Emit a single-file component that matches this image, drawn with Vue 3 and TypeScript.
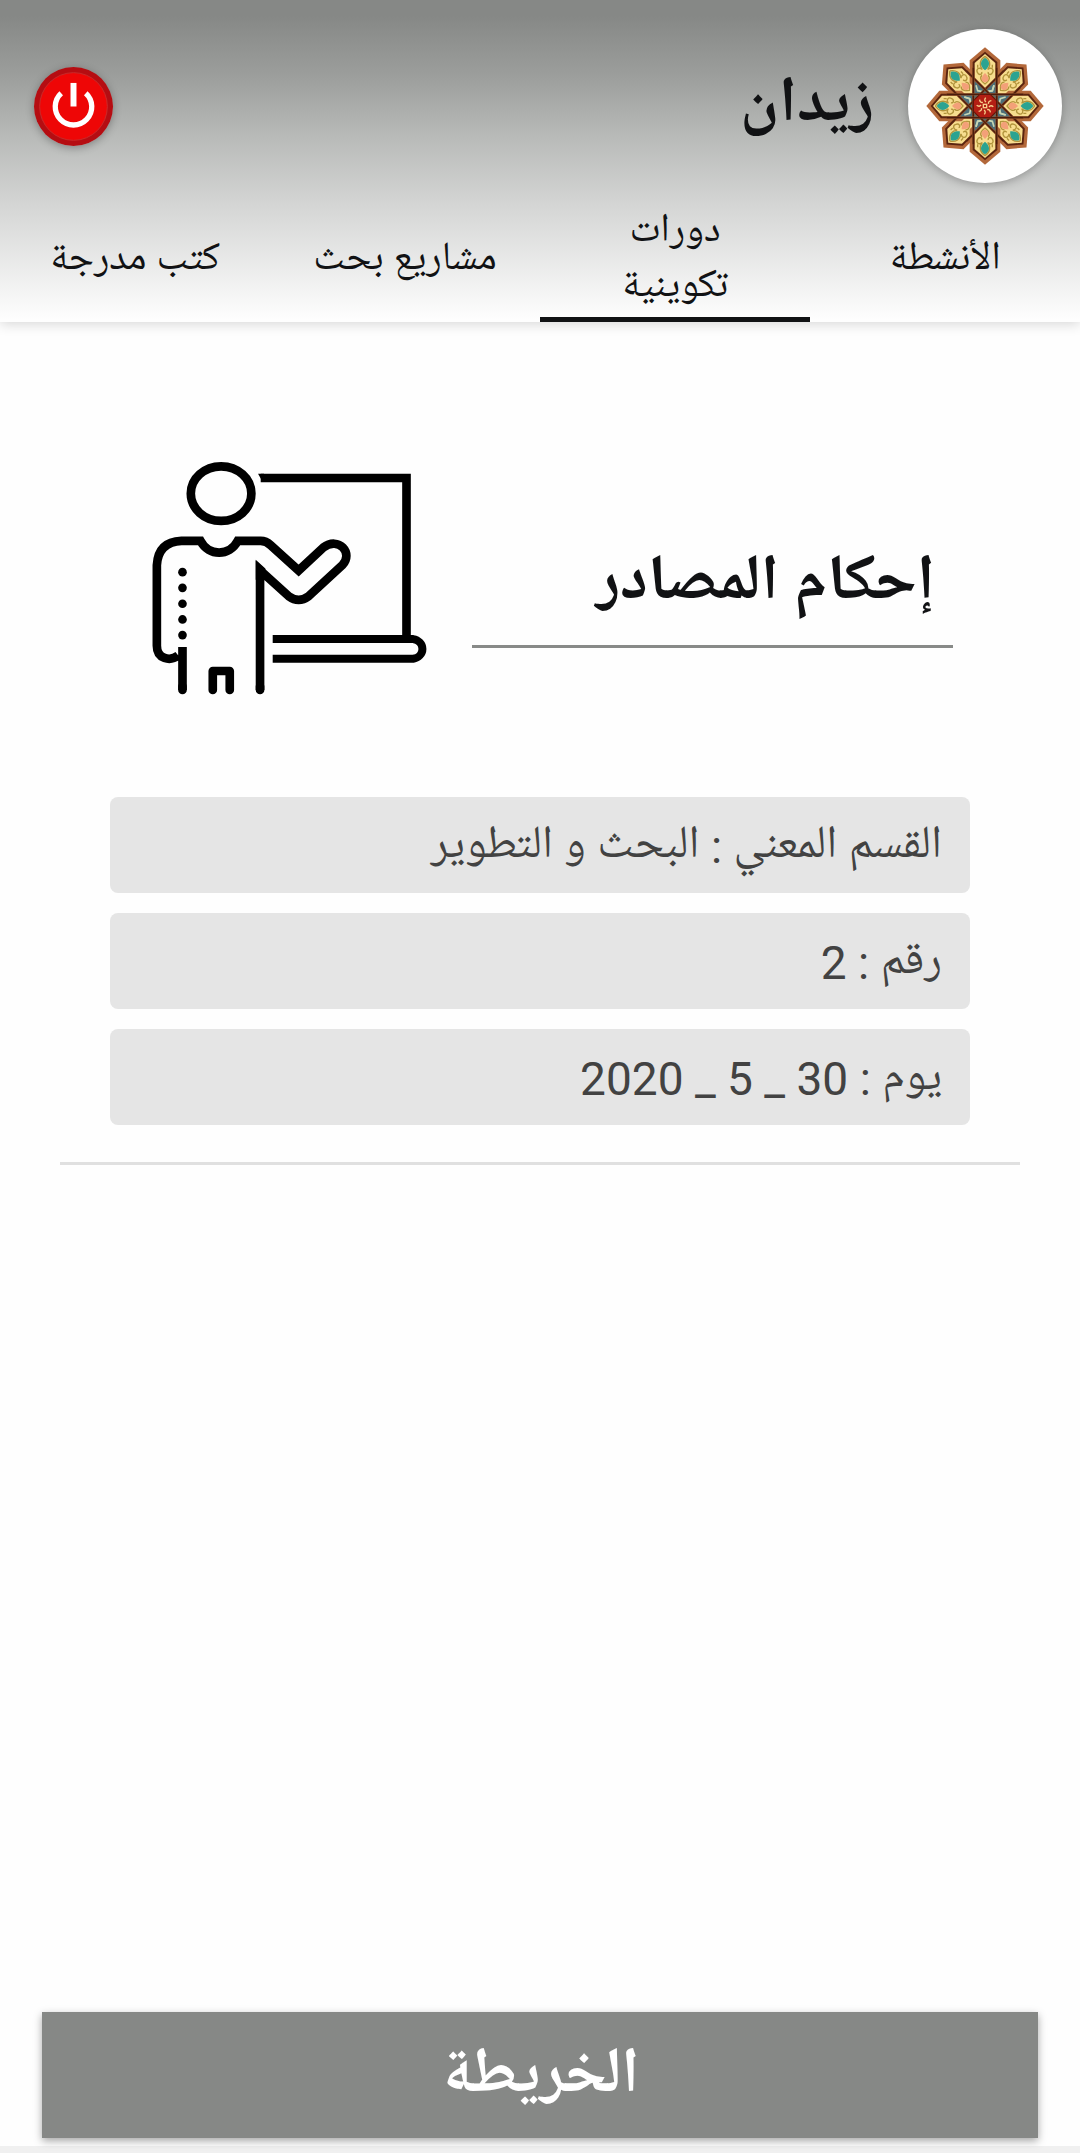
<script setup lang="ts">
import { ref } from 'vue'

interface Tab {
  id: string
  label: string
}

interface Detail {
  label: string
  value: string
}

const tabs: Tab[] = [
  { id: 'activities', label: 'الأنشطة' },
  { id: 'courses', label: 'دورات تكوينية' },
  { id: 'research', label: 'مشاريع بحث' },
  { id: 'books', label: 'كتب مدرجة' },
]

const details: Detail[] = [
  { label: 'القسم المعني', value: 'البحث و التطوير' },
  { label: 'رقم', value: '2' },
  { label: 'يوم', value: '2020 _ 5 _ 30' },
]

const active = ref('courses')
const petals = [45, 135, 225, 315, 0, 90, 180, 270]
const bands = [45, 135, 0, 90]
const buttons = [397, 444, 492, 539, 586]
</script>

<template>
  <div class="app" dir="rtl" lang="ar">
    <header class="header">
      <div class="bar">
        <div class="avatar">
          <svg viewBox="-231 -231 462 462" aria-hidden="true">
            <defs>
              <g id="petal">
                <path d="M0-176 46-137V-70L0-24-46-70V-137Z" fill="#b3683a" />
                <path d="M0-163 37-132V-84L0-48-37-84V-132Z" fill="#5a2410" />
                <path d="M0-156 31-129V-82L0-52-31-82V-129Z" fill="#f7dd8f" />
                <g fill="none" stroke="#b1943c" stroke-width="4">
                  <path d="M0-149C-16-139-18-122-8-110C-20-118-27-109-23-101C-19-91-7-94-10-102" />
                  <path d="M0-149C16-139 18-122 8-110C20-118 27-109 23-101C19-91 7-94 10-102" />
                  <path d="M-22-124V-115M22-124V-115M-9-92C-18-84-10-74 0-66C10-74 18-84 9-92" />
                </g>
                <path d="M0-145C18-133 14-119 0-107C-14-119-18-133 0-145Z" fill="#2ba391" />
                <path d="M0-99C15-84 12-73 0-71C-12-73-15-84 0-99Z" fill="#f3a078" />
              </g>
            </defs>
            <use v-for="a in petals" :key="a" href="#petal" :transform="`rotate(${a})`" />
            <path d="M-32-76 0-49 32-76 35-35 76-32 49 0 76 32 35 35 32 76 0 49-32 76-35 35-76 32-49 0-76-32-35-35Z" fill="#4d6e78" />
            <g v-for="a in [0, 90, 180, 270]" :key="a" :transform="`rotate(${a})`">
              <path d="M-27-62-22-46-8-43M-62-27-46-22-43-8M27-62 22-46 8-43" fill="none" stroke="#c6d5b3" stroke-width="5" />
            </g>
            <g v-for="a in bands" :key="a" :transform="`rotate(${a})`">
              <path d="M-35-115V115M35-115V115" stroke="#8b4a25" stroke-width="7" />
              <path d="M-35-115V115M35-115V115" stroke="#4a1c0d" stroke-width="4" />
            </g>
            <path d="M-15-35H15L35-15V15L15 35H-15L-35 15V-15Z" fill="#b31e13" stroke="#5a130b" stroke-width="3" />
            <g fill="none" stroke="#f7cf8b" stroke-width="4">
              <rect x="-5" y="-5" width="10" height="10" />
              <path v-for="a in petals" :key="a" d="M3-12Q-4-17 2-25" :transform="`rotate(${a})`" />
            </g>
          </svg>
        </div>
        <h1 class="name">زيدان</h1>
        <button class="power" type="button" aria-label="خروج">
          <svg viewBox="-119 -119 238 238" aria-hidden="true">
            <circle r="119" fill="#b50d12" />
            <circle r="102" fill="#ee0606" stroke="#c92a2a" stroke-width="3" />
            <path d="M-37-40A55 55 0 1 0 37-40" fill="none" stroke="#fff" stroke-width="16" />
            <path d="M0-71V0" stroke="#fff" stroke-width="18" />
          </svg>
        </button>
      </div>
      <nav class="tabs">
        <button
          v-for="tab in tabs"
          :key="tab.id"
          type="button"
          class="tab"
          :class="{ active: tab.id === active }"
          @click="active = tab.id"
        >
          <span>{{ tab.label }}</span>
        </button>
      </nav>
    </header>

    <main class="content">
      <article class="course">
        <div class="summary">
          <h2 class="title">إحكام المصادر</h2>
          <svg class="teacher" viewBox="66 66 828 700" aria-hidden="true">
            <g fill="none" stroke="#000" stroke-width="26">
              <ellipse cx="273" cy="161" rx="91" ry="82" />
              <path d="M392 114H830V597" />
              <path d="M428 598H850A34 30 0 0 1 850 657H428" stroke-width="24" />
              <path d="M157 622V751M144 647C120 666 80 658 80 618V376Q84 306 154 303H211C236 350 298 350 323 303H392Q408 303 422 316L506 392 580 323C626 288 672 340 637 376L536 469Q506 491 476 469L390 391V751" />
              <path d="M390 740V751M157 740V751M248 751V694H299V751" stroke-linecap="round" stroke-linejoin="round" />
            </g>
            <path d="M377 360 406 386V420H377ZM384 101H402V126H398Z" />
            <circle v-for="y in buttons" :key="y" cx="157" :cy="y" r="13" />
          </svg>
        </div>
        <ul class="details">
          <li v-for="d in details" :key="d.label" class="detail">
            {{ d.label }} :&nbsp;<bdi>{{ d.value }}</bdi>
          </li>
        </ul>
      </article>
    </main>

    <footer class="footer">
      <button class="map" type="button">الخريطة</button>
    </footer>
  </div>
</template>

<style>
body {
  margin: 0;
  background: #f0f0f0;
}
</style>

<style scoped>
.app {
  display: flex;
  flex-direction: column;
  min-height: 100vh;
  box-sizing: border-box;
  border-bottom: 7px solid #f0f0f0;
  background: #fefefe;
  color: #111214;
  font-family: Roboto, 'Noto Naskh Arabic UI', 'Noto Naskh Arabic', 'Noto Sans Arabic', 'DejaVu Sans', sans-serif;
}
button {
  margin: 0;
  padding: 0;
  border: 0;
  background: none;
  color: inherit;
  font: inherit;
  cursor: pointer;
}
svg {
  display: block;
  overflow: visible;
}
.header {
  background: linear-gradient(#868886 16px, #9c9e9c 76px, #b8bab8 136px, #d4d5d4 204px, #fefefe 320px);
  box-shadow: 0 2px 12px rgba(0, 0, 0, 0.16);
}
.bar {
  display: flex;
  align-items: center;
  height: 154px;
  padding: 29px 18px 23px 34px;
}
.avatar {
  width: 154px;
  height: 154px;
  border-radius: 50%;
  background: #fff;
  box-shadow: 0 2px 8px rgba(0, 0, 0, 0.25);
}
.name {
  flex: 1;
  margin: 0 34px 0 0;
  padding-top: 4px;
  font-size: 64px;
  line-height: 80px;
  font-weight: 700;
}
.power {
  width: 79px;
  height: 79px;
  border-radius: 50%;
  box-shadow: 0 2px 8px rgba(0, 0, 0, 0.3);
}
.tabs {
  display: flex;
}
.tab {
  flex: 1 1 0;
  display: flex;
  align-items: center;
  justify-content: center;
  height: 116px;
  padding: 0 40px 3px;
  box-sizing: border-box;
  border-bottom: 5px solid transparent;
  font-size: 40px;
  line-height: 55px;
}
.tab.active {
  border-bottom-color: #111214;
}
.content {
  flex: 1;
}
.course {
  margin: 0 60px;
  padding: 140px 50px 37px;
  border-bottom: 3px solid #e0e0e0;
}
.summary {
  display: flex;
  align-items: flex-start;
  justify-content: space-between;
  gap: 44px;
  padding: 0 17px 102px 42px;
}
.title {
  flex: 1;
  margin: 84px 0 0;
  padding: 0 18px 19px;
  border-bottom: 3px solid #888a88;
  font-size: 64px;
  line-height: 80px;
  font-weight: 700;
}
.teacher {
  width: 276px;
  height: 233px;
}
.details {
  display: flex;
  flex-direction: column;
  gap: 20px;
  margin: 0;
  padding: 0;
  list-style: none;
}
.detail {
  height: 96px;
  padding: 0 28px;
  box-sizing: border-box;
  border-radius: 8px;
  background: #e5e5e5;
  color: #424242;
  font-size: 46px;
  line-height: 100px;
}
.footer {
  padding: 0 42px 8px;
}
.map {
  width: 100%;
  height: 126px;
  background: #868886;
  box-shadow: 0 3px 8px rgba(0, 0, 0, 0.35);
  color: #fff;
  font-size: 64px;
  font-weight: 700;
}
</style>
